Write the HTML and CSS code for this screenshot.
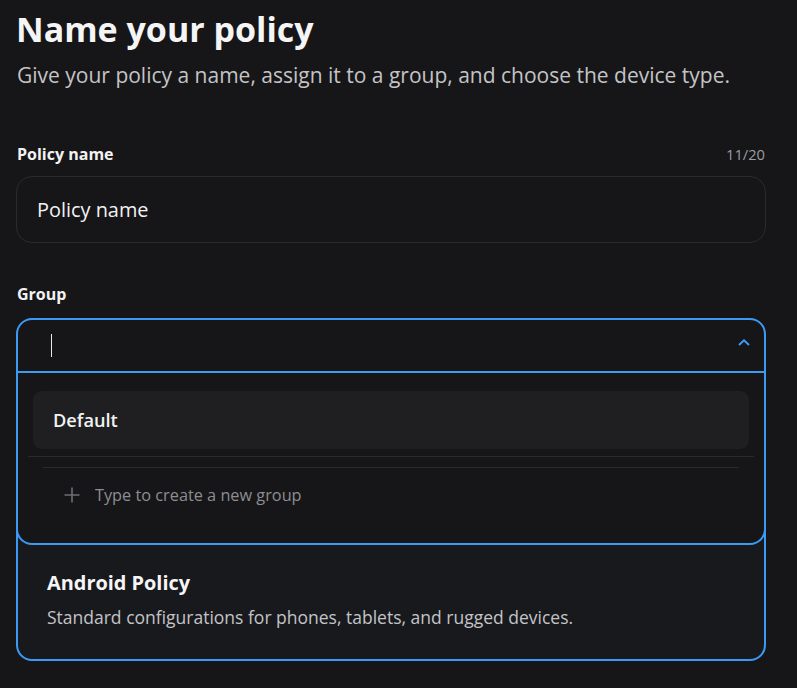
FILE: index.html
```html
<!DOCTYPE html>
<html lang="en">
<head>
<meta charset="utf-8">
<title>Name your policy</title>
<link rel="stylesheet" href="styles.css">
</head>
<body>
<main class="page">
  <h1 class="title">Name your policy</h1>
  <p class="subtitle">Give your policy a name, assign it to a group, and choose the device type.</p>

  <section class="field field-name">
    <div class="field-head">
      <label class="label">Policy name</label>
      <span class="counter">11/20</span>
    </div>
    <div class="input">Policy name</div>
  </section>

  <section class="field field-group">
    <div class="field-head">
      <label class="label">Group</label>
    </div>
    <div class="select">
      <div class="combo">
        <span class="caret"></span>
        <svg class="chevron" width="12" height="7" viewBox="0 0 12 7"><path d="M1 6 L6 1.3 L11 6" fill="none" stroke="#3b9af4" stroke-width="2"/></svg>
      </div>
      <div class="panel">
        <div class="option">Default</div>
        <div class="divider"></div>
        <div class="create">
          <svg class="plus" width="16" height="16" viewBox="0 0 16 16"><path d="M8 0.5 V15.5 M0.5 8 H15.5" stroke="#6e6e73" stroke-width="1.6" fill="none"/></svg>
          <span>Type to create a new group</span>
        </div>
      </div>
    </div>
  </section>

  <section class="card">
    <h2 class="card-title">Android Policy</h2>
    <p class="card-desc">Standard configurations for phones, tablets, and rugged devices.</p>
  </section>
</main>
</body>
</html>
```
FILE: styles.css
```css
*, *::before, *::after {
  box-sizing: border-box;
}
html, body {
  margin: 0;
  background: #161618;
}
body {
  font-family: "Open Sans", "Noto Sans", sans-serif;
  color: #f2f2f3;
}
.page {
  padding: 0 31px 0 16px;
}
.title {
  margin: 0;
  padding-top: 5px;
  font-size: 34px;
  font-weight: 700;
  line-height: 48px;
  color: #f5f5f6;
}
.subtitle {
  margin: 8px 0 0 1px;
  font-size: 21px;
  line-height: 28px;
  color: #c4c4c7;
}
.field-name {
  margin-top: 54px;
}
.field-head {
  display: flex;
  justify-content: space-between;
  align-items: baseline;
  padding-left: 1px;
  height: 22px;
}
.label {
  font-size: 16px;
  font-weight: 700;
  line-height: 22px;
  color: #f2f2f3;
}
.counter {
  font-size: 14.7px;
  line-height: 22px;
  color: #9c9ca1;
  padding-right: 1px;
}
.input {
  margin-top: 11px;
  height: 67px;
  border: 1px solid #2b2b2e;
  border-radius: 16px;
  display: flex;
  align-items: center;
  padding-left: 20px;
  font-size: 19.9px;
  color: #f2f2f3;
}
.field-group {
  margin-top: 40px;
}
.select {
  position: relative;
  margin-top: 13px;
}
.combo {
  height: 55px;
  border: 2px solid #3b9af4;
  border-radius: 16px 16px 0 0;
  display: flex;
  align-items: center;
  justify-content: space-between;
  padding: 0 14px 0 33px;
}
.caret {
  width: 1px;
  height: 23px;
  background: #e8e8ea;
}
.chevron {
  margin-top: -7px;
}
.panel {
  position: absolute;
  top: 100%;
  left: 0;
  right: 0;
  z-index: 2;
  height: 172px;
  background: #161618;
  border: 2px solid #3b9af4;
  border-top: 0;
  border-radius: 0 0 16px 16px;
  padding: 18px 15px 0;
}
.option {
  height: 58px;
  background: #1f1f21;
  border-radius: 9px;
  display: flex;
  align-items: center;
  padding-left: 20px;
  font-size: 18.2px;
  font-weight: 600;
  color: #f2f2f3;
}
.divider {
  margin: 7px -5px 0;
  height: 1px;
  background: #2a2a2d;
}
.create {
  margin: 10px 10px 0;
  border-top: 1px solid #2a2a2d;
  height: 54px;
  display: flex;
  align-items: center;
  gap: 15px;
  padding-left: 21px;
  font-size: 16.3px;
  color: #8d8d92;
}
.card {
  margin-top: 82px;
  border: 2px solid #3b9af4;
  border-radius: 16px;
  background: #18191d;
  padding: 112px 29px 30px;
}
.card-title {
  margin: 0;
  font-size: 19.9px;
  font-weight: 700;
  line-height: 28px;
  color: #f5f5f6;
}
.card-desc {
  margin: 8px 0 0;
  font-size: 17.5px;
  line-height: 24px;
  color: #c4c4c7;
}
```
